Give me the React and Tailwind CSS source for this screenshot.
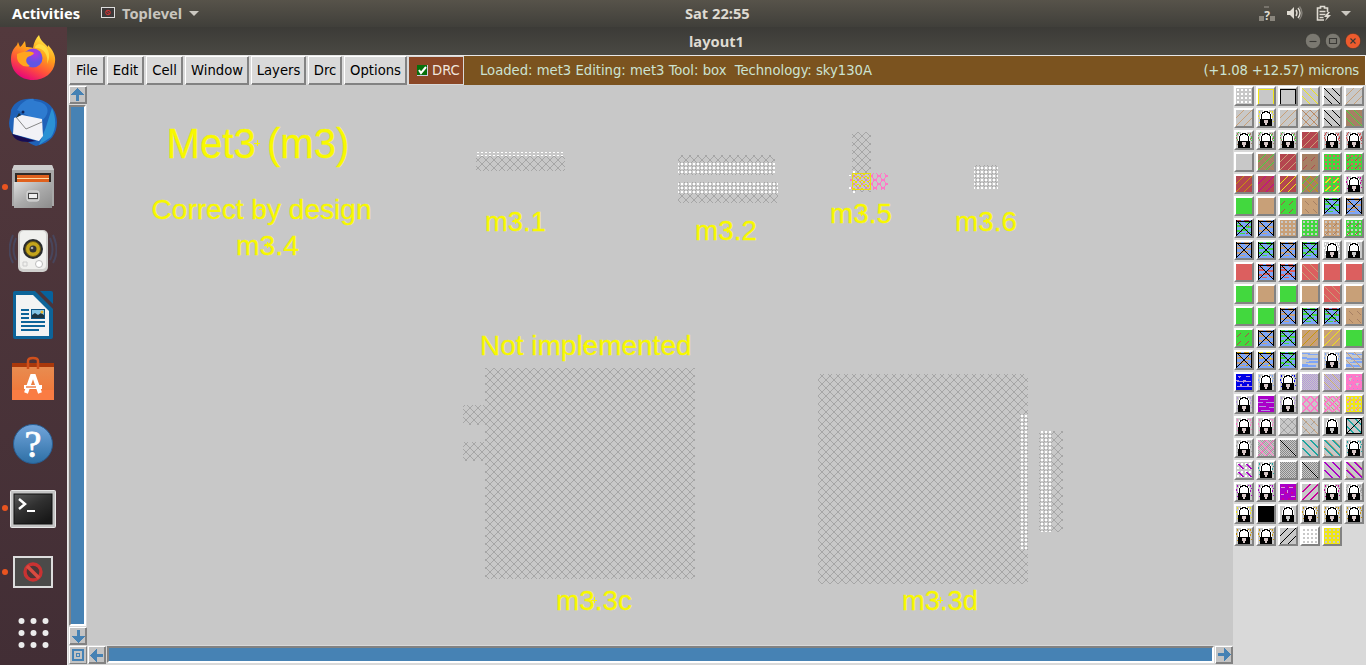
import React from 'react';

const C = {
  tan: '#c8a078', brown: '#a68064', red: '#b4464f', coral: '#dc5f5f', green: '#42d83e',
  blue: '#7da5f8', gold: '#c8960a', yellow: '#f0e614', pink: '#ff78c8', purple: '#aa00c8',
  magenta: '#c8009a', teal: '#1ea5a0', lav: '#b496dc', gray: '#a0a0a0', navy: '#0000e6',
};

/* Palette rows: each entry is "kind background stroke accent". */
const ROWS = [
  ['dots - white', 'frame - yellow', 'frame - black', 'down - yellow', 'down - black', 'up - tan'],
  ['up - tan', 'lock - yellow', 'up - tan', 'cross - tan', 'down - black', 'down brown green'],
  ['lock - brown green', 'lock - brown green', 'lock - brown green', 'up red tan', 'lock - coral red', 'lock - coral red'],
  ['flat -', 'cross brown green', 'up red tan', 'dash brown red', 'dots green coral', 'dotsup green coral red'],
  ['up red gold', 'up red magenta', 'up red yellow', 'cross brown green gold', 'dotsup green coral yellow', 'lock - magenta gray'],
  ['flat green', 'flat tan', 'dash green red', 'dashd tan brown', 'box blue green', 'box blue tan'],
  ['box blue green red', 'box blue tan', 'dots tan base', 'dots green base', 'dotsup tan base brown', 'dotsup green base red'],
  ['box blue tan', 'box blue green', 'box blue tan', 'box blue green', 'lock - white', 'lock -'],
  ['flat coral', 'box blue coral', 'box blue coral', 'down coral tan', 'flat coral', 'flat coral'],
  ['flat green', 'flat tan', 'flat green', 'flat tan', 'down coral tan', 'flat tan'],
  ['flat green', 'flat green', 'box blue tan', 'box blue green', 'box blue green red', 'dashd tan brown'],
  ['dash green red', 'box blue tan', 'box blue green', 'up tan gold', 'up tan yellow', 'flat green'],
  ['box blue tan gold', 'box blue tan yellow', 'box blue green', 'wave - blue', 'lock - blue', 'waved - blue tan'],
  ['tri - navy lav', 'lock - blue', 'lock - navy', 'check - lav', 'checkd - lav tan', 'speck pink lav'],
  ['lock - lav', 'band - purple lav', 'lock - lav', 'hex - pink', 'hexd - pink tan', 'dotsup yellow base pink'],
  ['lock - pink', 'lock - pink', 'hex - gray', 'downg - tan gray', 'lock -', 'teal - teal'],
  ['lock - gray', 'hexc - pink gray', 'checkd - gray black', 'down2 - teal', 'down2 - teal tan', 'lock - teal'],
  ['downdots - purple white', 'lock - teal', 'check - gray', 'checkd - gray black', 'down2 - purple', 'down2 - purple tan'],
  ['lock - purple', 'lock - purple', 'speck purple magenta', 'upb - magenta', 'lock - magenta', 'lock - gray gray'],
  ['lock - yellow', 'flat black', 'lock -', 'lock - gold', 'lock - gold', 'lock - gold'],
  ['lock - gold', 'lock - gold', 'up - black', 'dots white base', 'dots yellow base'],
];

const col = (n) => (n === '-' || n === 'base' ? '#c8c8c8' : C[n] || n);

function pixels(step, size, ox, oy, stagger) {
  let d = '';
  for (let y = oy, r = 0; y < 16; y += step, r++)
    for (let x = ox + (stagger && r % 2 ? step / 2 : 0); x < 16; x += step) d += `M${x} ${y}h${size}v${size}h-${size}z`;
  return d;
}

/* Stair-stepped diagonals, `w` pixels wide, with an optional dash. */
function diag(sign, w = 1, gap = 0, phase = 0, period = 8) {
  let d = '';
  for (let y = 0; y < 16; y++) {
    if (gap && (y + 1) % 8 < gap) continue;
    for (let x = 0; x < 16; x++)
      if ((((x - sign * y + phase) % period) + period) % period === 0) d += `M${x} ${y}h${w}v1h-${w}z`;
  }
  return d;
}
const DOTS = pixels(4, 2, 1, 1);
const CHECK = pixels(2, 1, 0, 0) + pixels(2, 1, 1, 1);
const DOWN = diag(1);
const DOWN2 = diag(1, 2);
const UP = diag(-1, 1, 0, 1);
const UP2 = diag(-1, 2, 0, 1);
const UPDASH = diag(-1, 1, 4, 1);
const DOWNDASH = diag(1, 1, 4);
const XBOX = diag(1, 1, 0, 0, 64) + diag(-1, 1, 0, -15, 64);
const WAVE = 'M0 1h8v1h8v1H6V2H0zM0 5h5v1h11v2H5V7H0zM7 9h9v2H4v-1h3zM0 12h6v1h8v2H0z';

function Lock({ a, b }) {
  return (
    <>
      {a && <path fill={col(a)} d="M1 1h1v2h-1zM3 2h1v1h-1zM0 5h1v2h-1zM2 5h1v2h-1zM1 8h1v1h-1zM12 1h1v1h-1zM14 1h1v2h-1zM15 4h1v1h-1zM14 6h1v2h-1zM1 12h1v1h-1zM15 11h1v1h-1z" />}
      {b && <path fill={col(b)} d="M2 0h1v1h-1zM0 3h1v1h-1zM1 7h1v1h-1zM13 2h1v2h-1zM15 5h1v2h-1zM15 8h1v1h-1z" />}
      <path d="M2 9V4h1V2h2V0h6v2h2v2h1v5z" fill="white" />
      <path d="M3 9V4h1V2h2V1h4v1h2v2h1v5h-2V5h-1V4H6v1H5v4z" fill="black" />
      <path d="M4 9V4h1V3h2V2h2v1h2v1h1v5h-1V5h-1V4H6v1H5v4z" fill="white" />
      <path d="M2 9h12v7H2z" fill="black" />
      <path d="M6 10h4v3H9v2H7v-2H6z" fill={a ? '#d8c8c8' : '#c8c8c8'} />
    </>
  );
}

function Art({ kind, a, b }) {
  const s = col(a), t = b ? col(b) : null;
  switch (kind) {
    case 'dots': return <path d={DOTS} fill={s} />;
    case 'dotsup': return <><path d={DOTS} fill={s} /><path d={b === 'yellow' ? diag(-1, 2, 3, 1) : UPDASH} fill={t} /></>;
    case 'frame': return <path d="M0 16V1h16v15h-1V2H1v14z" fill={s} />;
    case 'down': return <path d={DOWN} fill={s} />;
    case 'down2': return <>{t && <path d={diag(1, 1, 0, -2)} fill={t} />}<path d={DOWN2} fill={s} /></>;
    case 'downg': return <><path d={UPDASH} fill={t} /><path d={DOWN} fill={s} /></>;
    case 'downdots': return <><path d={DOTS} fill={t} /><path d={diag(1, 2, 3)} fill={s} /></>;
    case 'up': return <path d={UP} fill={s} />;
    case 'upb': return <path d={UP2} fill={s} />;
    case 'dash': return <path d={UPDASH} fill={s} />;
    case 'dashd': return <path d={DOWNDASH} fill={s} />;
    case 'cross': return <><path d={DOWN} fill={t || '#b4825f'} /><path d={UP} fill={s} /></>;
    case 'hex': return <><path d={a === 'gray' ? DOWN : DOWN2} fill={s} /><path d={a === 'gray' ? UP : UP2} fill={s} /></>;
    case 'hexd': return <><path d={diag(1, 1, 0, 4)} fill={t} /><path d={DOWN2} fill={s} /><path d={UP2} fill={s} /></>;
    case 'hexc': return <><path d={CHECK} fill={t} /><path d={DOWN} fill={s} /><path d={UP} fill={s} /></>;
    case 'check': return <path d={CHECK} fill={a === 'gray' ? '#888' : s} />;
    case 'checkd': return <><path d={CHECK} fill={a === 'gray' ? '#888' : s} /><path d={b === 'black' ? diag(1, 1, 0, 0, 64) : DOWN} fill={t} /></>;
    case 'wave': return <path d={WAVE} fill={s} />;
    case 'waved': return <><path d={WAVE} fill={s} /><path d={DOWN} fill={t} /></>;
    case 'tri': return <><path d="M0 0h16v16H0z" fill={s} /><path d="M2 2h3v1H4v1H3V3H2zM9 2h5v1h-4zM0 6h3v1h4V6h3v1h5v1H8v1H7V8H1zM1 12h3v-2h2v2h5v-2h2v2h3v1H1z" fill={t} /></>;
    case 'speck': return <><path d={a === 'lav' ? pixels(4, 1, 1, 2, true) : pixels(6, 2, 2, 2, true)} fill={s} /><path d={a === 'lav' ? 'M3 4h3v1h-1v2h-1zM10 9h3v1h-1v2h-1zM10 2h2v1h-2zM3 11h2v2h-1v-1h-1z' : 'M1 3h4v1H1zM9 3h4v1H9zM1 10h3v1H1zM11 12h4v1h-4zM7 6h1v3H7z'} fill={a === 'lav' ? '#c8c8c8' : '#d8a0dc'} /></>;
    case 'band': return <><path d="M0 0h16v16H0z" fill={s} /><path d="M2 3h8v1H2zM0 6h5v1H0zM8 6h8v1H8zM1 10h7v1H1zM11 11h5v1h-5zM3 14h9v1H3z" fill={t} /></>;
    case 'box': return (
      <>
        <path d="M1 3h4v1H1zM9 2h6v1H9zM1 5h6v2H1zM10 6h5v2h-5zM5 9h7v2H5zM1 10h3v2H1zM4 13h5v1H4zM11 12h4v1h-4z" fill={s} />
        <path d="M1 0h4v1H1zM8 0h5v1H8z" fill={t || s} />
        {t && <path d="M3 5h2v1H3zM12 5h1v2h-1zM4 11h2v1H4zM10 13h2v1h-2z" fill={t} />}
        <path d="M0 1h16v15h-1V2H1v14H0z" fill="black" />
        <path d={XBOX} fill="black" />
        <path d="M7 7h2v2H7z" fill="black" />
      </>
    );
    case 'teal': return <><path d={DOWN2} fill={s} /><path d="M0 0h16v16H0zM1 1v14h14V1z" fillRule="evenodd" fill="black" /><path d={diag(-1, 1, 0, -15, 64)} fill="black" /></>;
    case 'lock': return <Lock a={a} b={b} />;
    default: return null;
  }
}

function Swatch({ spec }) {
  const [kind, bg, a, b] = spec.split(' ');
  return (
    <div className="h-5 w-5 border-2 border-t-white border-l-white border-r-[#828282] border-b-[#828282] bg-[#c8c8c8]">
      <svg viewBox="0 0 16 16" className="block h-4 w-4 overflow-hidden" fill="none" shapeRendering="crispEdges">
        <rect width="16" height="16" fill={col(bg)} />
        <Art kind={kind} a={a} b={b} />
      </svg>
    </div>
  );
}

const MENUS = [
  ['File', 'w-[36px]'], ['Edit', 'w-[37px]'], ['Cell', 'w-[37px]'], ['Window', 'w-[64px]'],
  ['Layers', 'w-[55px]'], ['Drc', 'w-[34px]'], ['Options', 'w-[63px]'],
];

function ArrowButton({ turn }) {
  return (
    <div className="h-[18px] w-[18px] shrink-0 border border-t-white border-l-white border-r-[#828282] border-b-[#828282] bg-[#c3c3c3] shadow-[inset_-1px_-1px_0_#828282]">
      <svg viewBox="0 0 16 16" className={`block h-4 w-4 ${turn}`} shapeRendering="crispEdges">
        <path d="M7.500 1l6.500 7h-5v6H6V8H1z" fill="#4682b4" />
      </svg>
    </div>
  );
}

const LABELS = [
  ['Met3 (m3)', 166.5, 157.5, 183, 42], ['Correct by design', 151.5, 219, 220, 28.5], ['m3.4', 236, 255, 63, 28.5],
  ['m3.1', 485, 231, 61, 28.5], ['m3.2', 695, 240, 62, 28.5], ['m3.5', 830, 223, 62, 28.5], ['m3.6', 955, 231, 62, 28.5],
  ['Not implemented', 480, 355, 211.500, 28.5], ['m3.3c', 556, 610, 76, 28.5], ['m3.3d', 902, 610, 76, 28.5],
];
const METAL = [
  [476, 155, 89, 16], [678, 155, 97, 20], [678, 182, 100, 21], [852, 132, 19, 60], [974, 165, 24, 24],
  [485, 368, 210, 211], [463, 405, 22, 20], [463, 442, 22, 19], [818, 374, 210, 210], [1039, 431, 24, 101],
];
const ERRORS = [
  [477, 152, 87, 4], [678, 163, 97, 10], [678, 182, 100, 11], [974, 166, 24, 23], [1021, 415, 6, 135], [1040, 431, 12, 101],
  [853, 171, 2, 2], [849, 175, 2, 1], [849, 187, 2, 2], [853, 191, 2, 2],
];
const CROSSES = [[257, 143], [262, 209], [267, 245], [515, 221], [727, 230], [861, 213], [986, 221], [586, 345], [594, 600], [940, 600]];

function Canvas() {
  return (
    <svg viewBox="87 85 1146 560" className="block h-[560px] w-[1146px] bg-[#c8c8c8]">
      <defs>
        <pattern id="metal" width="8" height="8" patternUnits="userSpaceOnUse" x="2" y="4">
          <path d="M0 0h1v1H0zM1 1h1v1H1zM2 2h1v1H2zM3 3h2v2H3zM5 5h1v1H5zM6 6h1v1H6zM7 7h1v1H7zM7 0h1v1H7zM6 1h1v1H6zM5 2h1v1H5zM2 5h1v1H2zM1 6h1v1H1zM0 7h1v1H0z" fill="#a6a6a6" />
        </pattern>
        <pattern id="err" width="4" height="4" patternUnits="userSpaceOnUse" x="1" y="3"><rect width="2" height="2" fill="#fff" /></pattern>
        <pattern id="via" width="8" height="8" patternUnits="userSpaceOnUse" x="855" y="173">
          <path d="M0 0h2v2H0zM4 4h2v2H4zM0 4h2v1H0zM4 0h2v1H4zM2 3h2v1H2zM6 7h2v1H6zM6 2h1v1H6z" fill="#e8e000" />
        </pattern>
        <pattern id="pink" width="8" height="8" patternUnits="userSpaceOnUse" x="879" y="172">
          <path d="M3 0h2v1H3zM2 1h1v1H2zM5 1h1v1H5zM1 2h1v1H1zM6 2h1v1H6zM0 3h1v2H0zM7 3h1v2H7zM1 5h1v1H1zM6 5h1v1H6zM2 6h1v1H2zM5 6h1v1H5zM3 7h2v1H3zM2 0h1v1H2zM5 0h1v1H5zM2 7h1v1H2zM5 7h1v1H5zM1 3h1v1H1zM6 3h1v1H6zM1 4h1v1H1zM6 4h1v1H6z" fill="#ff78c8" />
        </pattern>
      </defs>
      <g shapeRendering="crispEdges">
        {METAL.map(([x, y, w, h], i) => <rect key={i} x={x} y={y} width={w} height={h} fill="url(#metal)" />)}
        <rect x="850" y="173" width="2" height="17" fill="url(#pink)" />
        <rect x="871" y="173" width="17" height="17" fill="url(#pink)" />
        <rect x="852" y="173" width="19" height="17" fill="url(#pink)" opacity=".4" />
        <rect x="852" y="173" width="19" height="17" fill="url(#via)" />
        <rect x="852.5" y="173.500" width="18" height="16" fill="none" stroke="#e6dc14" />
        {ERRORS.map(([x, y, w, h], i) => <rect key={i} x={x} y={y} width={w} height={h} fill={i > 5 ? '#fff' : 'url(#err)'} />)}
        <path d={CROSSES.map(([x, y]) => `M${x - 3} ${y}h6v1h-6zM${x} ${y - 3}h1v6h-1z`).join('')} fill="#f8f800" />
      </g>
      <g fill="#f8f800" stroke="#f8f800" strokeWidth=".3" fontFamily="'Liberation Sans', sans-serif">
        {LABELS.map(([t, x, y, w, s]) => <text key={t} x={x} y={y} textLength={w} fontSize={s} lengthAdjust="spacingAndGlyphs">{t}</text>)}
      </g>
    </svg>
  );
}

const dockSvg = 'block h-12 w-12';
const ICONS = [
  [false, (
    <svg viewBox="0 0 48 48" className={dockSvg}>
      <defs>
        <linearGradient id="fx" x1=".8" y1="0" x2=".3" y2="1"><stop stopColor="#fff34f" /><stop offset=".4" stopColor="#ffa21a" /><stop offset=".7" stopColor="#ff4f3c" /><stop offset="1" stopColor="#e5007f" /></linearGradient>
        <radialGradient id="fy" cx=".6" cy=".25"><stop stopColor="#b833e1" /><stop offset="1" stopColor="#6055e6" /></radialGradient>
      </defs>
      <path d="M30 1c1 4 3 6 6 9l3 3v-2c5 5 8 11 7 17-1 11-11 18-22 18C11 46 2 37 2 25c0-6 2-10 6-14l1-3 2 5c2-1 3-4 5-6l1 6c2 0 5 0 7 1 1-6 3-10 6-13z" fill="url(#fx)" />
      <circle cx="24" cy="24" r="9.500" fill="url(#fy)" />
      <path d="M8 20c5-2 12-4 17-1-1 3-6 3-7 5-2 3 0 6 3 8-6 2-12-2-13-8z" fill="#ffa51f" />
      <path d="M26 14c8-1 14 7 12 16 5-9 1-19-8-20-3 1-4 2-4 4z" fill="#ffe447" opacity=".8" />
    </svg>)],
  [false, (
    <svg viewBox="0 0 48 48" className={dockSvg}>
      <path d="M2 12C6 3 14 0 23 1c14-1 25 9 25 23 0 12-6 21-21 24-4-1-6-3-8-4C8 43 0 35 0 25c1-7 2-10 2-13z" fill="#1f62b8" />
      <path d="M8 12C13 3 20 0 25 1c-3 3 8 1 12 7 4 5 0 13-7 16L14 15z" fill="#2e7bd0" />
      <path d="M43 10c4 9 5 21-1 29l-12 8 7-18z" fill="#2b91d4" />
      <path d="M5 20l8-3 20 4 1 17-4 5-26-7z" fill="#f2f2f6" />
      <path d="M7 19l10 12 16-7" fill="none" stroke="#888" />
      <path d="M3 36l24 7-8 1C10 44 5 41 3 36z" fill="#180d52" />
      <circle cx="14" cy="14" r="1.500" fill="#102458" /><path d="M10 15l-3 5 5-3z" fill="#233" />
    </svg>)],
  [true, (
    <svg viewBox="0 0 48 48" className={dockSvg}>
      <defs><linearGradient id="fc" x2="1" y2="1"><stop stopColor="#ddd" /><stop offset=".5" stopColor="#aaa" /><stop offset="1" stopColor="#8c8c8c" /></linearGradient></defs>
      <path d="M5 2h38l2 5v36H3V7z" fill="#a8a8a8" /><path d="M5 2h38l2 5H3z" fill="#ccc" />
      <path d="M6 10h36v10H6z" fill="#312b28" /><path d="M8 12h32v8H8z" fill="#e0611d" /><path d="M8 15h32v1H8z" fill="#ffd8a0" />
      <path d="M5 19h38v26H5z" fill="url(#fc)" /><rect x="18" y="28" width="12" height="10" rx="2" fill="#bbb" stroke="#ddd" /><rect x="19.500" y="30.500" width="9" height="5" fill="#eee" stroke="#444" />
    </svg>)],
  [false, (
    <svg viewBox="0 0 48 48" className={dockSvg}>
      <path d="M4 8q-7 16 0 28M44 8q7 16 0 28M7 11q-5 11 0 22M41 11q5 11 0 22" fill="none" stroke="#435a88" strokeOpacity=".45" strokeWidth="2" />
      <rect x="9" y="3" width="30" height="42" rx="5" fill="#d0d0ce" /><rect x="11" y="4" width="26" height="38" rx="4" fill="#f0f0ee" />
      <circle cx="24" cy="22" r="10" fill="#292b2d" /><circle cx="24" cy="22" r="7.500" fill="#c3a41c" stroke="#6b5815" /><circle cx="24" cy="22" r="3.500" fill="#333" /><circle cx="23" cy="21" r="1.300" fill="#aaa" />
      <circle cx="30" cy="37" r="3.500" fill="#fff" stroke="#bbb" /><path d="M14 35h4v4h-4z" fill="none" stroke="#ccc" />
    </svg>)],
  [false, (
    <svg viewBox="0 0 48 48" className={dockSvg}>
      <path d="M6 0h20l18 18v28q0 2-2 2H6q-2 0-2-2V2q0-2 2-2z" fill="#0d6499" /><path d="M7 4h17l16 16v25H7z" fill="#f3f3f3" /><path d="M31 0h11q2 0 2 2v11z" fill="#07629c" />
      <path d="M12 19h8M12 23h8M12 27h8M12 31h24M12 35h24M12 39h18" stroke="#0d6499" strokeWidth="2" />
      <path d="M22 18h14v10H22z" fill="#0d5586" /><path d="M23 19h12v8H23z" fill="#83c4e5" /><path d="M23 27v-3l3-2 3 2 3-2 3 2v3z" fill="#1d3440" /><circle cx="33" cy="21" r="1.500" fill="#eeb72b" />
    </svg>)],
  [false, (
    <svg viewBox="0 0 48 48" className={dockSvg}>
      <defs><linearGradient id="sw" x2="0" y2="1"><stop stopColor="#e88c50" /><stop offset="1" stopColor="#f27334" /></linearGradient></defs>
      <path d="M3 8h42v6H3z" fill="#a9380b" /><path d="M3 12h42v33H3z" fill="url(#sw)" /><path d="M3 35h42v10H3z" fill="#fa7c43" />
      <path d="M19 14V6q0-3 5-3t5 3v8" fill="none" stroke="#d0501c" strokeWidth="2.500" />
      <path d="M17 38l6-17h2l6 17M15 32h18" fill="none" stroke="#fff" strokeWidth="4" /><path d="M17 32h10" stroke="#ed6d2d" strokeWidth="1.300" />
    </svg>)],
  [false, (
    <svg viewBox="0 0 48 48" className={dockSvg}>
      <defs><linearGradient id="hp" x2="0" y2="1"><stop stopColor="#72a5db" /><stop offset="1" stopColor="#2d6fa5" /></linearGradient></defs>
      <circle cx="24" cy="24" r="19.500" fill="url(#hp)" stroke="#285d92" /><text x="24" y="37" textAnchor="middle" fontFamily="'Liberation Serif', serif" fontSize="38" stroke="#fff" strokeWidth=".8" fill="#fff">?</text>
    </svg>)],
  [true, (
    <svg viewBox="0 0 48 48" className={dockSvg}>
      <defs><linearGradient id="tm" x2=".7" y2="1"><stop stopColor="#585858" /><stop offset=".5" stopColor="#303030" /><stop offset="1" stopColor="#181818" /></linearGradient></defs>
      <rect x="1.500" y="6.500" width="45" height="37" rx="1" fill="#c4c4c4" stroke="#e8e8e8" /><rect x="5" y="10" width="38" height="30" fill="url(#tm)" stroke="#111" />
      <path d="M10 15l6 5-6 5" fill="none" stroke="#fff" strokeWidth="2.500" /><path d="M18 27h8" stroke="#fff" strokeWidth="2" />
    </svg>)],
  [true, (
    <svg viewBox="0 0 48 48" className={dockSvg}>
      <rect x="5" y="9" width="38" height="30" fill="#4b4a49" stroke="#ddd" strokeWidth="2" /><circle cx="24" cy="24" r="8" fill="#4b3636" stroke="#c93232" strokeWidth="3.400" /><path d="M18 18l12 12" stroke="#d94a40" strokeWidth="3.400" />
    </svg>)],
];

export default function App() {
  return (
    <div className="flex h-[665px] w-[1366px] flex-col overflow-hidden bg-[#c8c8c8] font-['DejaVu_Sans_Condensed','DejaVu_Sans',sans-serif]">
      <header className="flex h-[27px] shrink-0 items-center bg-linear-to-b from-[#57534a] to-[#403f3a] pb-[2px] font-['Noto_Sans',sans-serif] text-[14.67px] font-bold text-[#dfdbd2]">
        <div className="w-[101px] shrink-0 pl-3 text-white">Activities</div>
        <svg viewBox="0 0 14 12" className="mt-px h-3 w-[14px] shrink-0"><rect x=".5" y=".5" width="13" height="10" fill="#3c3939" stroke="#ddd" /><circle cx="7" cy="5.500" r="2.300" fill="none" stroke="#d33" /><path d="M5.500 4l3 3" stroke="#d33" /></svg>
        <div className="w-[74px] shrink-0 pl-[7px] text-[#c8c5be]">Toplevel</div>
        <svg viewBox="0 0 10 5" className="mt-[2px] h-[5px] w-[10px] shrink-0"><path d="M0 0h10L5 5z" fill="#cbc8c1" /></svg>
        <div className="w-[1042px] shrink-0 pl-[486px]">Sat 22:55</div>
        <svg viewBox="0 0 100 18" className="h-[18px] w-[100px] shrink-0" fill="none">
          <path d="M18 12h5v5h-5zM29 12h5v5h-5z" fill="#8a867d" /><path d="M23 2h5v2h-5z" fill="#77736b" /><text x="26" y="16" textAnchor="middle" fontSize="12" fontWeight="bold" fill="#dfdbd2">?</text>
          <path d="M46 7h3l4-4v12l-4-4h-3z" fill="#dfdbd2" /><path d="M55 6q2 3 0 6M57 4q4 5 0 10" stroke="#dfdbd2" strokeWidth="1.400" /><path d="M58.500 2.500q5 6.500 0 13" stroke="#85817a" strokeWidth="1.300" />
          <path d="M83 16h-6.500V4h3V2.500h4V4h3v4" stroke="#dfdbd2" strokeWidth="1.600" /><path d="M78.500 7.500h6M78.500 10.500h6M78.500 13.500h4" stroke="#dfdbd2" strokeWidth="1.300" /><path d="M87 8l-4 5h3l-2 4 6-6h-3l2-3z" fill="#dfdbd2" />
        </svg>
        <svg viewBox="0 0 10 5" className="mt-[2px] h-[5px] w-[10px] shrink-0"><path d="M0 0h10L5 5z" fill="#cbc8c1" /></svg>
      </header>
      <div className="flex h-[638px]">
        <aside className="flex w-[67px] shrink-0 flex-col items-center gap-[16.3px] bg-linear-to-b from-[#53393d] to-[#422e35] pt-[7px]">
          {ICONS.map(([open, icon], i) => (
            <div key={i} className="relative flex h-12 w-full shrink-0 justify-center pr-px">
              {open && <span className="absolute top-[21px] left-[2px] h-[6px] w-[6px] rounded-full bg-[#e95420]" />}
              {icon}
            </div>
          ))}
          <svg viewBox="0 0 48 48" className="-mt-[3px] block h-12 w-12 shrink-0" fill="#ececec">
            {[12, 24, 36].map((x) => [12, 24, 36].map((y) => <circle key={`${x}-${y}`} cx={x - 0.5} cy={y - 1} r="3" />))}
          </svg>
        </aside>
        <main className="flex w-[1299px] flex-col">
          <div className="flex h-7 shrink-0 items-center bg-linear-to-b from-[#3c3b37] to-[#4a4943]">
            <div className="w-[1238px] pb-px pl-[622px] font-['Noto_Sans',sans-serif] text-[14.67px] font-bold text-[#dfdbd2]">layout1</div>
            {['M4.500 8.500h7', 'M4.500 5.500h7v5h-7z', 'M5.500 5.500l5 5m0-5l-5 5'].map((d, i) => (
              <svg key={d} viewBox="0 0 16 16" className="mr-1 h-4 w-4" fill="none">
                <circle cx="8" cy="8" r="7.700" fill={i === 2 ? '#ed5b2d' : '#7b7971'} stroke="#33322e" strokeWidth=".6" /><path d={d} stroke="#3a3935" strokeWidth="1.100" />
              </svg>
            ))}
          </div>
          <div className="flex h-[30px] shrink-0 border-t border-l-2 border-[#e8e8e8] bg-[#7b531f] text-[14.67px]">
            <nav className="flex gap-[2px] bg-[#d9d9d9]">
              {MENUS.map(([name, w]) => (
                <button key={name} className={`h-[29px] ${w} border border-t-white border-l-white border-r-[#828282] border-b-[#828282] bg-[#d9d9d9] pb-[2px] text-center text-black shadow-[inset_-1px_-1px_0_#828282]`}>{name}</button>
              ))}
            </nav>
            <div className="flex w-[57px] items-center gap-[4px] border border-l-2 border-[#d9d9d9] bg-[#8b4726] pb-[2px] pl-[8px] text-[#f0e5dd]">
              <svg viewBox="0 0 11 11" className="mt-px h-[11px] w-[11px] shrink-0"><path d="M0 0h11v11H0z" fill="#ccd" /><path d="M0 0h10v10H0z" fill="#06700b" /><path d="M2 5l2 3 5-6" stroke="white" strokeWidth="2" fill="none" /></svg>
              DRC
            </div>
            <div className="flex grow items-center justify-between border-r border-white pr-[6px] pb-[2px] pl-[16px] whitespace-pre text-[#cce3d3]">
              <span>Loaded: met3 Editing: met3 Tool: box  Technology: sky130A</span><span className="tracking-[-0.2px]">(+1.08 +12.57) microns</span>
            </div>
          </div>
          <div className="flex h-[580px]">
            <div className="w-[1166px]">
              <div className="flex h-[560px]">
                <div className="flex w-5 flex-col items-center gap-px border-l border-[#ececec] bg-[#d9d9d9] pt-px">
                  <ArrowButton turn="rotate-0" />
                  <div className="h-[521px] w-[17px] shrink-0 border-2 border-t-[#828282] border-l-[#828282] border-r-white border-b-white bg-[#4682b4]" />
                  <ArrowButton turn="rotate-180" />
                </div>
                <Canvas />
              </div>
              <div className="flex h-5 items-center gap-px border-l border-[#ececec] bg-[#d9d9d9] pb-px pl-px">
                <div className="flex h-[18px] w-[18px] shrink-0 items-center justify-center border border-t-white border-l-white border-r-[#828282] border-b-[#828282] bg-[#c3c3c3]">
                  <div className="flex h-3 w-3 items-center justify-center border-2 border-[#4682b4]"><div className="h-1 w-1 border border-[#4682b4]" /></div>
                </div>
                <ArrowButton turn="-rotate-90" />
                <div className="h-[17px] w-[1107px] border-2 border-t-[#828282] border-l-[#828282] border-r-white border-b-white bg-[#4682b4]" />
                <ArrowButton turn="rotate-90" />
              </div>
            </div>
            <div className="w-[133px] bg-[#d9d9d9] pt-px pl-px">
              <div className="grid grid-cols-[repeat(6,20px)] gap-[2px]">
                {ROWS.flat().map((spec, i) => <Swatch key={i} spec={spec} />)}
              </div>
            </div>
          </div>
        </main>
      </div>
    </div>
  );
}
